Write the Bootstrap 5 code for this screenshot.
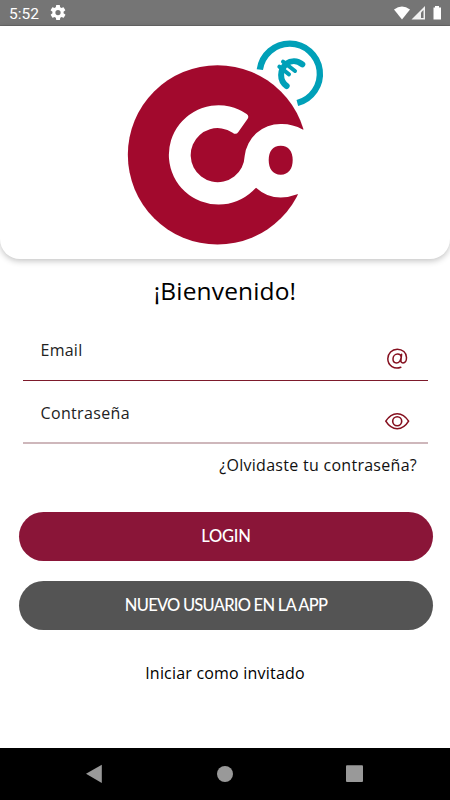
<!DOCTYPE html>
<html lang="es">
<head>
<meta charset="utf-8">
<meta name="viewport" content="width=device-width, initial-scale=1">
<title>Login</title>
<link href="https://cdn.jsdelivr.net/npm/bootstrap@5.3.0/dist/css/bootstrap.min.css" rel="stylesheet">
<style>
body{font-family:"Open Sans","Noto Sans",sans-serif;color:#111;background:#fff;height:800px;overflow:hidden}
svg{display:block;flex:none}
.statusbar{height:26px;background:#757575;border-bottom:1px solid #666;padding:0 8px 0 9px;font:15.500px/27px Roboto,sans-serif;color:#fff}
.statusbar>span{margin-top:3px}
.gear{margin-left:9px}
.hero{height:233px;border-radius:0 0 20px 20px;box-shadow:0 2px 6px rgba(0,0,0,.24);padding-top:4px}
.hero svg{margin-left:115px}
.welcome{font-size:24.5px;line-height:34px;margin:15px 0 0;color:#000;letter-spacing:.15px}
.fields{margin:0 22px 0 23px}
.field{padding:0 18px 0 17.500px;font-size:16px;line-height:24px;color:#222}
.field svg{margin-top:10px}
.field-email{height:73px;padding-top:30px;border-bottom:1px solid #7d1a2b}
.field-pass{height:63px;padding-top:20px;border-bottom:2px solid #ceb7bb}
.field-email span{letter-spacing:.25px}
.field-pass span{letter-spacing:.35px}
.forgot{font-size:16px;line-height:24px;margin:9px 33px 0 0;letter-spacing:.28px}
.actions{margin:0 17px 0 19px;padding-top:35px;gap:20px}
.pill{height:49px;border:0;font:500 16.5px/49px Lato,sans-serif;color:#fff;padding:0}
.pill-login{background:#8a1538;letter-spacing:-.2px}
.pill-new{background:#545454;letter-spacing:-.76px}
.guest{font-size:16px;line-height:24px;margin-top:31px;color:#000;letter-spacing:.2px}
.navkeys{height:52px;background:#000}
</style>
</head>
<body class="d-flex flex-column">
<header class="statusbar d-flex align-items-center flex-shrink-0">
  <span id="clock">5:52</span>
  <svg class="gear" width="20" height="15" viewBox="1 2 22 20"><path fill="#fff" fill-rule="evenodd" d="M19.4 13a7.500 7.500 0 0 0 0-2l2.100-1.600a.5.5 0 0 0 .1-.6l-2-3.500a.5.5 0 0 0-.6-.2l-2.500 1a7 7 0 0 0-1.700-1L14.500 2.400A.5.5 0 0 0 14 2h-4a.5.5 0 0 0-.5.4L9.100 5.100a7 7 0 0 0-1.700 1l-2.500-1a.5.5 0 0 0-.6.2l-2 3.500a.5.5 0 0 0 .1.6L4.600 11a7.500 7.500 0 0 0 0 2l-2.100 1.600a.5.5 0 0 0-.1.6l2 3.500c.1.200.4.300.6.200l2.500-1a7 7 0 0 0 1.700 1l.4 2.700c0 .2.200.4.500.4h4c.3 0 .5-.2.500-.4l.4-2.700a7 7 0 0 0 1.700-1l2.500 1c.2.100.5 0 .6-.2l2-3.500a.5.5 0 0 0-.1-.6zM12 15.500a3.500 3.500 0 1 1 0-7 3.500 3.500 0 0 1 0 7z"/></svg>
  <svg class="ms-auto" width="48" height="16" viewBox="0 0 48 16"><path fill="#fff" d="M0 4.500Q8 -1.500 16 4.500L8 14.500Z"/><path fill="#fff" fill-opacity=".9" d="M17.500 14.500L31 1V14.500Z"/><path fill="#757575" d="M27 7.500L29.500 5V13H27Z"/><path fill="#fff" d="M39.500 2.500H41V1H45V2.500H47V14.500H39.500Z"/></svg>
</header>
<section class="hero bg-white flex-shrink-0">
  <svg width="220" height="225" viewBox="0 0 660 675">
    <circle cx="307.500" cy="374.500" r="269" fill="#a2092d"/>
    <path fill="#fff" d="M563 298.500Q532 281 497 282A108 108 0 0 0 389 378A81 81 0 1 1 353 308Q363 316 370 306L398 266Q403 258 395 252A149 149 0 1 0 413 483L423 473Q475 520 547 493L600 493L600 298Z"/>
    <path fill="#a2092d" d="M497 347C521 347 533 364 533 390S521 434 497 434S461 416 461 390S473 347 497 347Z"/>
    <path fill="none" stroke="#00a0b8" stroke-width="19" d="M434.500 119A90.500 90.500 0 1 1 547 219"/>
    <g fill="none" stroke="#00a0b8" stroke-linecap="round">
      <path stroke-width="18" d="M562 103C547 91 528 91 514 101C494 119 492 151 515 168"/>
      <path stroke-width="12" d="M493 110L522 133M504 95L540 123"/>
    </g>
  </svg>
</section>
<main class="flex-grow-1 d-flex flex-column">
  <h1 class="welcome text-center fw-normal">¡Bienvenido!</h1>
  <div class="fields">
    <div class="field field-email d-flex justify-content-between">
      <span>Email</span>
      <svg width="26" height="22" viewBox="0 0 26 22" fill="none" stroke="#85101f" stroke-width="1.500" stroke-linecap="round"><path d="M16.800 19.300C10.500 21.800 3.800 17.600 3.800 10.800C3.800 5.300 8 1.200 13.300 1.200C18.500 1.200 22.500 4.700 22.500 9.500C22.500 12.900 21 14.900 19 14.900C17.300 14.900 16.700 13.700 17 12L17.600 6.200M17.200 9C16.900 7 15.500 6 13.700 6C11 6 9 8.200 9 11C9 13.400 10.400 14.900 12.400 14.900C14.900 14.900 16.700 12.600 17.200 9"/></svg>
    </div>
    <div class="field field-pass d-flex justify-content-between">
      <span>Contraseña</span>
      <svg width="26" height="20" viewBox="0 0 26 20" fill="none" stroke="#85101f" stroke-width="1.600"><path d="M1.800 10.200Q6.500 2.700 13.200 2.700T24.600 10.200Q20 17.700 13.200 17.700T1.800 10.200Z" stroke-linejoin="round"/><circle cx="13.200" cy="10.200" r="4.500"/></svg>
    </div>
  </div>
  <div class="forgot text-end"><span>¿Olvidaste tu contraseña?</span></div>
  <div class="actions d-flex flex-column">
    <button class="btn pill pill-login rounded-pill w-100"><span>LOGIN</span></button>
    <button class="btn pill pill-new rounded-pill w-100"><span>NUEVO USUARIO EN LA APP</span></button>
  </div>
  <div class="guest text-center"><span>Iniciar como invitado</span></div>
</main>
<footer class="navkeys flex-shrink-0">
  <svg width="450" height="52" viewBox="0 748 450 52" fill="#999"><path d="M86 773.800L101.800 764.800V783Z"/><circle cx="225" cy="774" r="8"/><rect x="346" y="765.300" width="17" height="16.700" rx="1"/></svg>
</footer>
<script src="https://cdn.jsdelivr.net/npm/bootstrap@5.3.0/dist/js/bootstrap.bundle.min.js"></script>
</body>
</html>
